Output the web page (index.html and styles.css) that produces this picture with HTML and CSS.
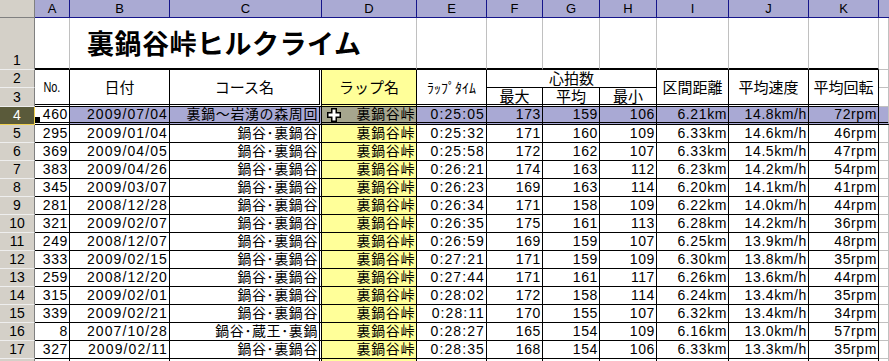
FILE: index.html
```html
<!DOCTYPE html>
<html lang="ja">
<head>
<meta charset="utf-8">
<title>裏鍋谷峠ヒルクライム</title>
<link rel="stylesheet" href="styles.css">
</head>
<body>
<div class="sheet">
  <div class="row colhdr">
    <div class="corner"></div><div>A</div><div>B</div><div>C</div><div>D</div><div>E</div><div>F</div><div>G</div><div>H</div><div>I</div><div>J</div><div>K</div><div class="last"></div>
  </div>

  <div class="row r1">
    <div class="rh">1</div>
    <div class="t"></div>
    <div class="t title">裏鍋谷峠ヒルクライム</div>
    <div class="t"></div><div class="t"></div><div class="t"></div><div class="t"></div><div class="t"></div><div class="t"></div><div class="t"></div>
    <div class="g"></div>
  </div>

  <div class="row hd">
    <div class="rh">2</div>
    <div class="h m2"><span class="no">No.</span></div>
    <div class="h m2">日付</div>
    <div class="h m2 cc">コース名</div>
    <div class="h m2 y">ラップ名</div>
    <div class="h m2 small">ﾗｯﾌﾟﾀｲﾑ</div>
    <div class="h span3 bot">心拍数</div>
    <div class="h m2">区間距離</div>
    <div class="h m2">平均速度</div>
    <div class="h m2">平均回転</div>
    <div class="g"></div>
  </div>
  <div class="row hd3">
    <div class="rh">3</div>
    <div class="h">最大</div>
    <div class="h">平均</div>
    <div class="h">最小</div>
    <div class="g"></div>
  </div>

  <div class="row sel">
    <div class="rh">4</div>
    <div class="c a">460<span class="handle"></span></div><div class="c d">2009/07/04</div><div class="c cc">裏鍋～岩湧の森周回</div><div class="c y"><svg class="cursor" width="14" height="14" viewBox="0 0 14 14"><path d="M4.75 0.75H9.25V4.75H13.25V9.25H9.25V13.25H4.75V9.25H0.75V4.75H4.75Z" fill="#fff" stroke="#000" stroke-width="1.5"/></svg>裏鍋谷峠</div><div class="c d">0:25:05</div><div class="c">173</div><div class="c">159</div><div class="c">106</div><div class="c">6.21km</div><div class="c">14.8km/h</div><div class="c">72rpm</div><div class="g"></div>
  </div>
  <div class="row">
    <div class="rh">5</div>
    <div class="c">295</div><div class="c d">2009/01/04</div><div class="c cc">鍋谷･裏鍋谷</div><div class="c y">裏鍋谷峠</div><div class="c d">0:25:32</div><div class="c">171</div><div class="c">160</div><div class="c">109</div><div class="c">6.33km</div><div class="c">14.6km/h</div><div class="c">46rpm</div><div class="g"></div>
  </div>
  <div class="row">
    <div class="rh">6</div>
    <div class="c">369</div><div class="c d">2009/04/05</div><div class="c cc">鍋谷･裏鍋谷</div><div class="c y">裏鍋谷峠</div><div class="c d">0:25:58</div><div class="c">172</div><div class="c">162</div><div class="c">107</div><div class="c">6.33km</div><div class="c">14.5km/h</div><div class="c">47rpm</div><div class="g"></div>
  </div>
  <div class="row">
    <div class="rh">7</div>
    <div class="c">383</div><div class="c d">2009/04/26</div><div class="c cc">鍋谷･裏鍋谷</div><div class="c y">裏鍋谷峠</div><div class="c d">0:26:21</div><div class="c">174</div><div class="c">163</div><div class="c">112</div><div class="c">6.23km</div><div class="c">14.2km/h</div><div class="c">54rpm</div><div class="g"></div>
  </div>
  <div class="row">
    <div class="rh">8</div>
    <div class="c">345</div><div class="c d">2009/03/07</div><div class="c cc">鍋谷･裏鍋谷</div><div class="c y">裏鍋谷峠</div><div class="c d">0:26:23</div><div class="c">169</div><div class="c">163</div><div class="c">114</div><div class="c">6.20km</div><div class="c">14.1km/h</div><div class="c">41rpm</div><div class="g"></div>
  </div>
  <div class="row">
    <div class="rh">9</div>
    <div class="c">281</div><div class="c d">2008/12/28</div><div class="c cc">鍋谷･裏鍋谷</div><div class="c y">裏鍋谷峠</div><div class="c d">0:26:34</div><div class="c">171</div><div class="c">158</div><div class="c">109</div><div class="c">6.22km</div><div class="c">14.0km/h</div><div class="c">44rpm</div><div class="g"></div>
  </div>
  <div class="row">
    <div class="rh">10</div>
    <div class="c">321</div><div class="c d">2009/02/07</div><div class="c cc">鍋谷･裏鍋谷</div><div class="c y">裏鍋谷峠</div><div class="c d">0:26:35</div><div class="c">175</div><div class="c">161</div><div class="c">113</div><div class="c">6.28km</div><div class="c">14.2km/h</div><div class="c">36rpm</div><div class="g"></div>
  </div>
  <div class="row">
    <div class="rh">11</div>
    <div class="c">249</div><div class="c d">2008/12/07</div><div class="c cc">鍋谷･裏鍋谷</div><div class="c y">裏鍋谷峠</div><div class="c d">0:26:59</div><div class="c">169</div><div class="c">159</div><div class="c">107</div><div class="c">6.25km</div><div class="c">13.9km/h</div><div class="c">48rpm</div><div class="g"></div>
  </div>
  <div class="row">
    <div class="rh">12</div>
    <div class="c">333</div><div class="c d">2009/02/15</div><div class="c cc">鍋谷･裏鍋谷</div><div class="c y">裏鍋谷峠</div><div class="c d">0:27:21</div><div class="c">171</div><div class="c">159</div><div class="c">109</div><div class="c">6.30km</div><div class="c">13.8km/h</div><div class="c">35rpm</div><div class="g"></div>
  </div>
  <div class="row">
    <div class="rh">13</div>
    <div class="c">259</div><div class="c d">2008/12/20</div><div class="c cc">鍋谷･裏鍋谷</div><div class="c y">裏鍋谷峠</div><div class="c d">0:27:44</div><div class="c">171</div><div class="c">161</div><div class="c">117</div><div class="c">6.26km</div><div class="c">13.6km/h</div><div class="c">44rpm</div><div class="g"></div>
  </div>
  <div class="row">
    <div class="rh">14</div>
    <div class="c">315</div><div class="c d">2009/02/01</div><div class="c cc">鍋谷･裏鍋谷</div><div class="c y">裏鍋谷峠</div><div class="c d">0:28:02</div><div class="c">172</div><div class="c">158</div><div class="c">114</div><div class="c">6.24km</div><div class="c">13.4km/h</div><div class="c">35rpm</div><div class="g"></div>
  </div>
  <div class="row">
    <div class="rh">15</div>
    <div class="c">339</div><div class="c d">2009/02/21</div><div class="c cc">鍋谷･裏鍋谷</div><div class="c y">裏鍋谷峠</div><div class="c d">0:28:11</div><div class="c">170</div><div class="c">155</div><div class="c">107</div><div class="c">6.32km</div><div class="c">13.4km/h</div><div class="c">34rpm</div><div class="g"></div>
  </div>
  <div class="row">
    <div class="rh">16</div>
    <div class="c">8</div><div class="c d">2007/10/28</div><div class="c cc">鍋谷･蔵王･裏鍋</div><div class="c y">裏鍋谷峠</div><div class="c d">0:28:27</div><div class="c">165</div><div class="c">154</div><div class="c">109</div><div class="c">6.16km</div><div class="c">13.0km/h</div><div class="c">57rpm</div><div class="g"></div>
  </div>
  <div class="row">
    <div class="rh">17</div>
    <div class="c">327</div><div class="c d">2009/02/11</div><div class="c cc">鍋谷･裏鍋谷</div><div class="c y">裏鍋谷峠</div><div class="c d">0:28:35</div><div class="c">168</div><div class="c">154</div><div class="c">106</div><div class="c">6.33km</div><div class="c">13.3km/h</div><div class="c">35rpm</div><div class="g"></div>
  </div>
  <div class="row">
    <div class="rh"></div>
    <div class="c"></div><div class="c"></div><div class="c cc"></div><div class="c y"></div><div class="c"></div><div class="c"></div><div class="c"></div><div class="c"></div><div class="c"></div><div class="c"></div><div class="c"></div><div class="g"></div>
  </div>
</div>
</body>
</html>
```

FILE: styles.css
```css
* { box-sizing: border-box; }
html, body { margin: 0; padding: 0; background: #fff; }
body {
  width: 889px;
  height: 361px;
  overflow: hidden;
  font-family: "Liberation Sans", "Noto Sans CJK JP", sans-serif;
  font-size: 14px;
  color: #000;
}
.sheet {
  display: grid;
  grid-template-columns: 35px 35px 100px 152px 95px 70px 56px 57px 57px 72px 80px 70px 10px;
  grid-template-rows: 18px 52px 18px 19px repeat(15, 18px);
}
.row { display: contents; }

/* column headers */
.colhdr > div {
  background: #aaaad3;
  border-right: 1px solid #16168a;
  border-bottom: 1px solid #16168a;
  font-size: 13px;
  display: flex;
  align-items: center;
  justify-content: center;
  line-height: 17px;
}
.colhdr > .corner {
  background: #d4d0c8;
  border-right: 1px solid #808080;
  border-bottom: 1px solid #808080;
}
.colhdr > .last { border-right: none; }

/* row headers */
.rh {
  grid-column: 1;
  background: #d4d0c8;
  border-right: 1px solid #808080;
  border-bottom: 1px solid #eeeeee;
  font-size: 14px;
  display: flex;
  align-items: flex-end;
  justify-content: center;
  line-height: 17px;
}
.hd .rh { grid-row: 3; }
.hd3 .rh { grid-row: 4; }

/* row 1 */
.t {
  border-right: 1px solid #c0c0c0;
  border-bottom: 2px solid #000;
}
.title {
  grid-column: 3 / span 3;
  font-family: "Noto Sans CJK JP", sans-serif;
  font-weight: bold;
  font-size: 27px;
  letter-spacing: 0.5px;
  line-height: 27px;
  display: flex;
  align-items: flex-end;
  padding: 0 0 12px 17px;
  white-space: nowrap;
}
.g {
  border-right: 1px solid #c0c0c0;
  border-bottom: 1px solid #c0c0c0;
}

/* header rows 2-3 */
.h {
  border-right: 1px solid #000;
  border-bottom: 1px solid #000;
  display: flex;
  align-items: center;
  justify-content: center;
  font-size: 15px;
  line-height: 17px;
  white-space: nowrap;
}
.hd .m2 {
  grid-row: 3 / span 2;
  border-bottom: 3px double #000;
}
.hd .span3 { grid-column: 7 / span 3; grid-row: 3; align-items: flex-end; }
.hd .g { grid-column: 13; grid-row: 3; }
.hd3 .h { grid-row: 4; border-bottom: 3px double #000; }
.hd3 .h:nth-child(2) { grid-column: 7; }
.hd3 .h:nth-child(3) { grid-column: 8; }
.hd3 .h:nth-child(4) { grid-column: 9; }
.hd3 .g { grid-column: 13; grid-row: 4; }
.no {
  display: inline-block;
  font-size: 14px;
  transform: scaleX(0.78);
}
.small { font-size: 14px; font-family: "Noto Sans CJK JP", sans-serif; }

/* data cells */
.c {
  border-right: 1px solid #000;
  border-bottom: 1px solid #000;
  display: flex;
  align-items: center;
  justify-content: flex-end;
  padding: 0 1px 0 2px;
  line-height: 17px;
  letter-spacing: 0.6px;
  white-space: nowrap;
  overflow: hidden;
  position: relative;
}
.c.d { letter-spacing: 1.1px; }
.cc { border-right: 3px double #000; }
.y { background: #ffff99; }

/* selected row 4 */
.sel .c, .sel .g {
  background: #a9a9d4;
  border-bottom: 3px double #000;
}
.sel .c.a { background: #fff; overflow: visible; }
.sel .c.y { background: #a6a68e; }
.sel .rh {
  background: #5a5a3a;
  color: #fff;
  border-bottom: 1px solid #f0d050;
  border-right: 1px solid #f0d050;
}
.handle {
  position: absolute;
  left: 0;
  bottom: 0;
  width: 5px;
  height: 5px;
  background: #000;
  border-top: 2px solid #000;
}
.cursor {
  position: absolute;
  left: 5px;
  top: 1px;
}
```
